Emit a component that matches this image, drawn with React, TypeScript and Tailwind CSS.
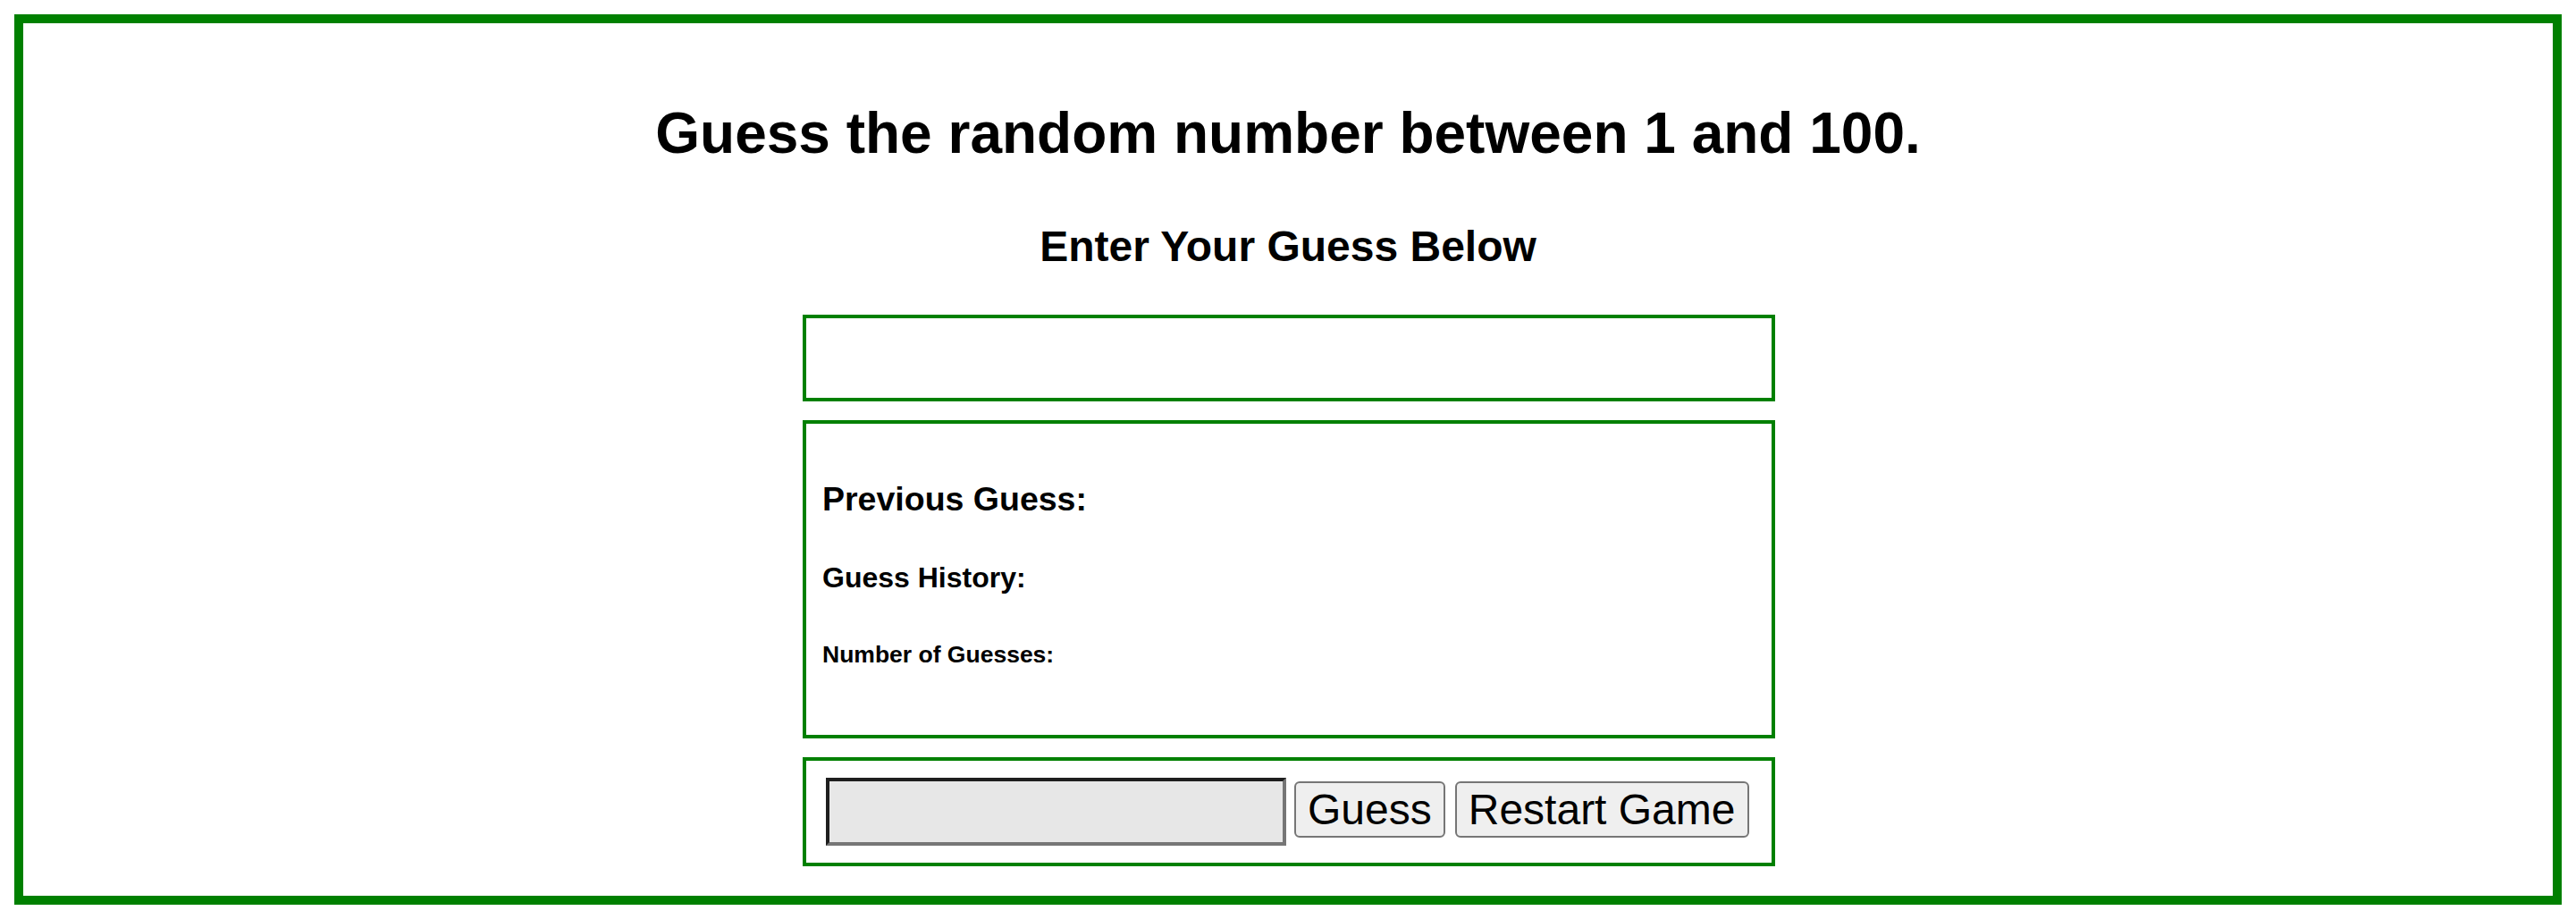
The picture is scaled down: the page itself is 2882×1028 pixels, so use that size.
import { useState } from 'react';

export default function App() {
  const [guess, setGuess] = useState('');
  const [history, setHistory] = useState<number[]>([]);

  const submit = () => {
    const n = parseInt(guess, 10);
    if (!isNaN(n)) setHistory([...history, n]);
    setGuess('');
  };

  return (
    <div className="m-[16px] border-[10px] border-[#008000] bg-white pt-[86px] pb-[33px] flex flex-col items-center text-black font-['Liberation_Sans',Arial,sans-serif]">
      <h1 className="text-[64px] leading-[74px] font-bold">Guess the random number between 1 and 100.</h1>
      <h2 className="mt-[62px] text-[48px] leading-[55px] font-bold">Enter Your Guess Below</h2>

      {/* Result message */}
      <div className="mt-[49px] ml-[2px] w-[1088px] h-[97px] border-4 border-[#008000]" />

      {/* Stats */}
      <div className="mt-[21px] ml-[2px] w-[1088px] h-[356px] border-4 border-[#008000] pl-[18px] pt-[63px] flex flex-col">
        <h3 className="text-[37.5px] leading-[43px] font-bold">
          Previous Guess: {history.length > 0 ? history[history.length - 1] : ''}
        </h3>
        <h4 className="mt-[48px] text-[32px] leading-[37px] font-bold">Guess History: {history.join(', ')}</h4>
        <h5 className="mt-[52px] text-[26.5px] leading-[30px] font-bold">
          Number of Guesses: {history.length > 0 ? history.length : ''}
        </h5>
      </div>

      {/* Controls */}
      <div className="mt-[21px] ml-[2px] w-[1088px] h-[122px] border-4 border-[#008000] pl-[22px] pt-[19px] flex items-start">
        <input
          type="text"
          value={guess}
          onChange={(e) => setGuess(e.target.value)}
          className="w-[515px] h-[76px] bg-[#e7e7e7] border-4 border-t-[#1e1e1e] border-l-[#1e1e1e] border-b-[#767676] border-r-[#767676] px-[4px] text-[48px] outline-none"
        />
        <button
          onClick={submit}
          className="ml-[9px] mt-[4px] h-[63px] px-[13px] bg-[#efefef] border-2 border-[#767676] rounded-[6px] text-[48px] leading-[55px]"
        >
          Guess
        </button>
        <button
          onClick={() => { setHistory([]); setGuess(''); }}
          className="ml-[11px] mt-[4px] h-[63px] px-[13px] bg-[#efefef] border-2 border-[#767676] rounded-[6px] text-[48px] leading-[55px]"
        >
          Restart Game
        </button>
      </div>
    </div>
  );
}
